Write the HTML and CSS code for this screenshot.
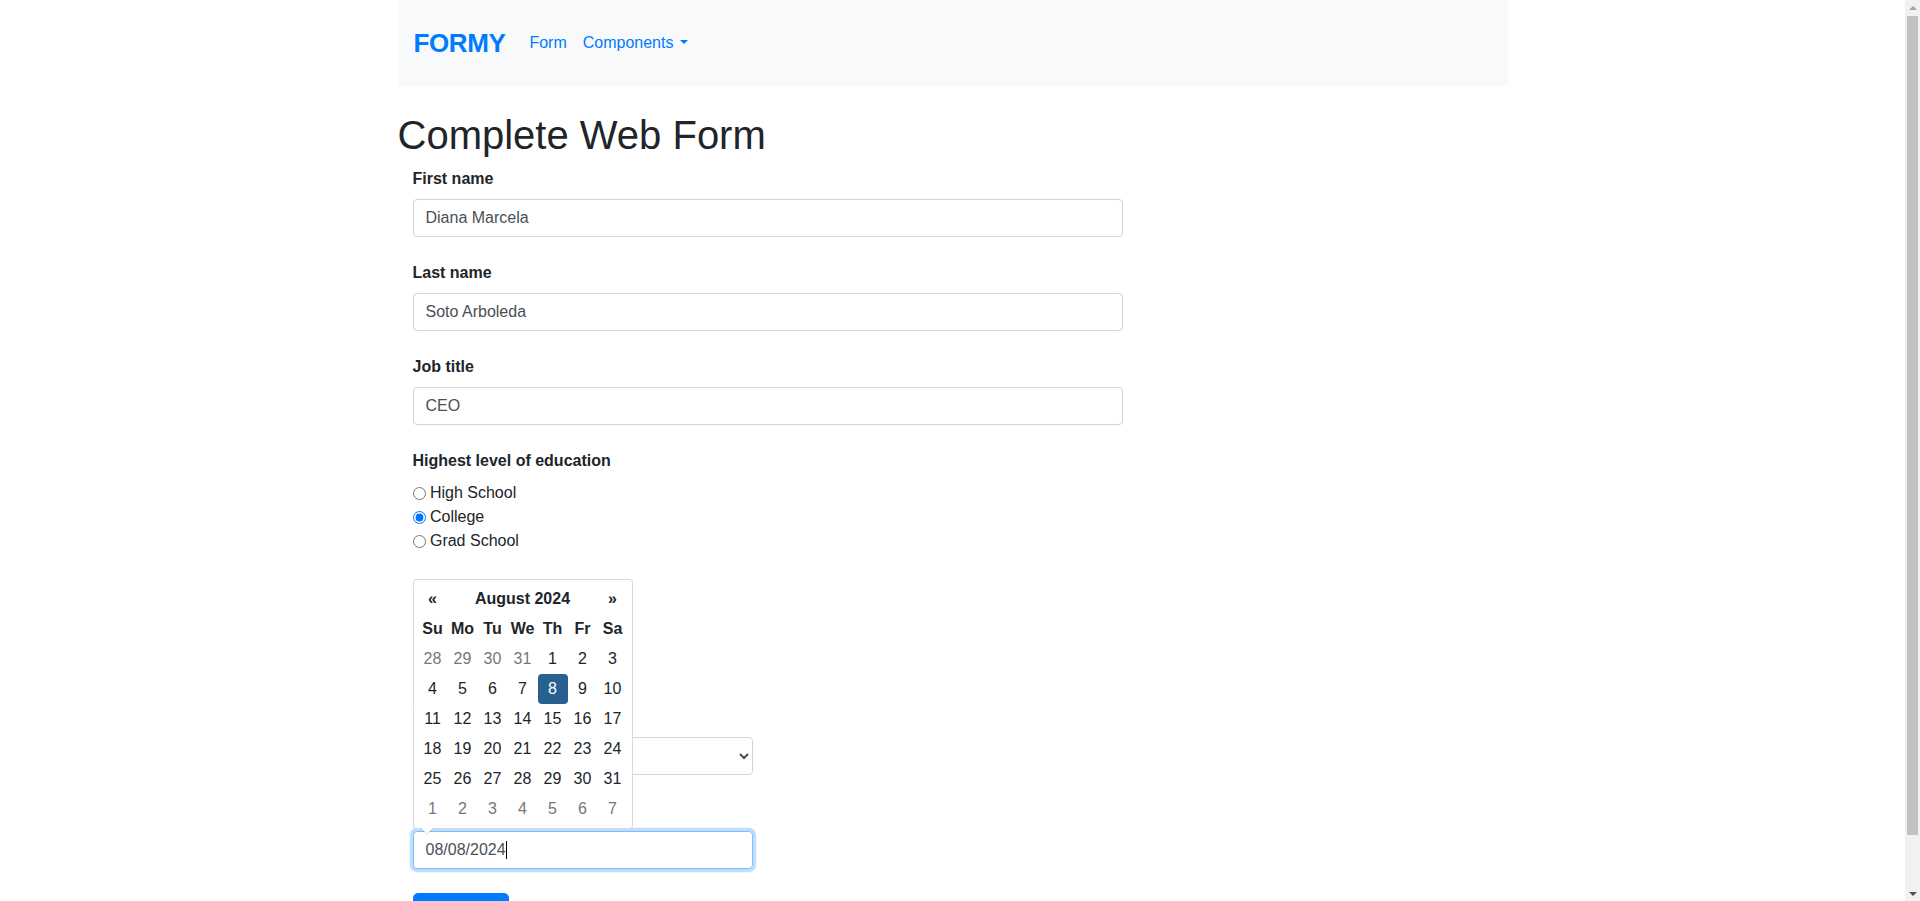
FILE: index.html
```html
<!DOCTYPE html>
<html lang="en">
<head>
<meta charset="utf-8">
<title>Formy</title>
<link rel="stylesheet" href="styles.css">
</head>
<body>
<div class="page">
<div class="container">
  <nav class="navbar">
    <a class="brand" href="#">FORMY</a>
    <ul class="nav">
      <li><a class="nav-link" href="#">Form</a></li>
      <li><a class="nav-link dropdown-toggle" href="#">Components</a></li>
    </ul>
  </nav>
  <h1 class="title">Complete Web Form</h1>
  <form class="form">
    <div class="group group-wide">
      <label class="label" for="first-name">First name</label>
      <input class="control" id="first-name" type="text" value="Diana Marcela">
    </div>
    <div class="group group-wide">
      <label class="label" for="last-name">Last name</label>
      <input class="control" id="last-name" type="text" value="Soto Arboleda">
    </div>
    <div class="group group-wide">
      <label class="label" for="job-title">Job title</label>
      <input class="control" id="job-title" type="text" value="CEO">
    </div>
    <div class="group">
      <div class="label">Highest level of education</div>
      <div class="choice"><input class="tick" type="radio" name="edu"> High School</div>
      <div class="choice"><input class="tick" type="radio" name="edu" checked> College</div>
      <div class="choice"><input class="tick" type="radio" name="edu"> Grad School</div>
    </div>
    <div class="group">
      <div class="label">Sex</div>
      <div class="choice"><input class="tick" type="checkbox"> Male</div>
      <div class="choice"><input class="tick" type="checkbox" checked> Female</div>
      <div class="choice"><input class="tick" type="checkbox"> Prefer not to say</div>
    </div>
    <div class="group group-narrow">
      <label class="label" for="years">Years of experience</label>
      <select class="control select" id="years">
        <option>Select an option</option>
        <option>0-1</option>
        <option>2-4</option>
        <option>5-9</option>
        <option>10+</option>
      </select>
    </div>
    <div class="group group-narrow">
      <div class="label">Date</div>
      <div class="date-wrap">
        <div class="control focused">08/08/2024<span class="caret"></span></div>
        <div class="datepicker">
          <table class="dp-table">
            <thead>
              <tr><th>«</th><th colspan="5">August 2024</th><th>»</th></tr>
              <tr><th>Su</th><th>Mo</th><th>Tu</th><th>We</th><th>Th</th><th>Fr</th><th>Sa</th></tr>
            </thead>
            <tbody>
              <tr><td class="muted">28</td><td class="muted">29</td><td class="muted">30</td><td class="muted">31</td><td>1</td><td>2</td><td>3</td></tr>
              <tr><td>4</td><td>5</td><td>6</td><td>7</td><td class="active">8</td><td>9</td><td>10</td></tr>
              <tr><td>11</td><td>12</td><td>13</td><td>14</td><td>15</td><td>16</td><td>17</td></tr>
              <tr><td>18</td><td>19</td><td>20</td><td>21</td><td>22</td><td>23</td><td>24</td></tr>
              <tr><td>25</td><td>26</td><td>27</td><td>28</td><td>29</td><td>30</td><td>31</td></tr>
              <tr><td class="muted">1</td><td class="muted">2</td><td class="muted">3</td><td class="muted">4</td><td class="muted">5</td><td class="muted">6</td><td class="muted">7</td></tr>
            </tbody>
          </table>
        </div>
      </div>
    </div>
    <div class="group group-last">
      <a class="btn" href="#">Submit</a>
    </div>
  </form>
</div>
</div>
<div class="scrollbar">
  <div class="sb-arrow sb-up"></div>
  <div class="sb-thumb"></div>
  <div class="sb-arrow sb-down"></div>
</div>
</body>
</html>
```

FILE: styles.css
```css
* { box-sizing: border-box; }

body {
  margin: 0;
  font-family: "Liberation Sans", Arial, sans-serif;
  font-size: 16px;
  line-height: 1.5;
  color: #212529;
  background: #fff;
}

.page {
  margin-right: 15px;
}

.container {
  width: 1140px;
  margin: 0 auto;
  padding: 0 15px;
}

.navbar {
  height: 86px;
  background: #f8f9fa;
  display: flex;
  align-items: center;
  padding: 0 16px;
}

.brand {
  font-size: 26px;
  font-weight: 700;
  line-height: 1.5;
  letter-spacing: -0.4px;
  color: #007bff;
  text-decoration: none;
  margin-right: 16px;
}

.nav {
  list-style: none;
  margin: 0;
  padding: 0;
  display: flex;
}

.nav-link {
  display: block;
  padding: 8px;
  color: #007bff;
  text-decoration: none;
}

.dropdown-toggle::after {
  content: "";
  display: inline-block;
  margin-left: 0.4em;
  vertical-align: 0.255em;
  border-top: 0.3em solid;
  border-right: 0.3em solid transparent;
  border-left: 0.3em solid transparent;
  border-bottom: 0;
}

.title {
  font-size: 40px;
  font-weight: 400;
  line-height: 1.2;
  margin: 25px 0 8px;
}

.form {
  padding: 0 15px;
}

.group {
  margin-bottom: 24px;
}

.group-last {
  margin-bottom: 16px;
}

.group-wide { max-width: 710px; }
.group-narrow { max-width: 340px; }

.label {
  display: block;
  font-weight: 700;
  margin-bottom: 8px;
}

.control {
  display: block;
  width: 100%;
  height: 38px;
  padding: 6px 12px;
  font-family: inherit;
  font-size: 16px;
  line-height: 1.5;
  color: #495057;
  background: #fff;
  border: 1px solid #ced4da;
  border-radius: 4px;
}

.select {
  padding: 6px 8px;
}

.focused {
  border-color: #80bdff;
  box-shadow: 0 0 0 3.2px rgba(0, 123, 255, 0.25);
}

.caret {
  display: inline-block;
  width: 1px;
  height: 18px;
  background: #000;
  vertical-align: -4px;
}

.choice {
  line-height: 24px;
}

.tick {
  margin: 0;
  width: 13px;
  height: 13px;
  vertical-align: -2px;
}

.date-wrap {
  position: relative;
}

.datepicker {
  position: absolute;
  left: 0;
  bottom: calc(100% + 2px);
  padding: 4px;
  background: #fff;
  border: 1px solid rgba(0, 0, 0, 0.15);
  border-radius: 4px;
  z-index: 10;
  color: #212529;
}

.datepicker::before {
  content: "";
  position: absolute;
  left: 6px;
  bottom: -7px;
  border-top: 7px solid rgba(0, 0, 0, 0.15);
  border-left: 7px solid transparent;
  border-right: 7px solid transparent;
}

.datepicker::after {
  content: "";
  position: absolute;
  left: 7px;
  bottom: -6px;
  border-top: 6px solid #fff;
  border-left: 6px solid transparent;
  border-right: 6px solid transparent;
}

.dp-table {
  border-collapse: collapse;
  margin: 0;
}

.dp-table th,
.dp-table td {
  width: 30px;
  height: 30px;
  padding: 0;
  text-align: center;
  border-radius: 4px;
}

.dp-table th {
  font-weight: 700;
}

.dp-table td.muted {
  color: #777;
}

.dp-table td.active {
  background: #286090;
  color: #fff;
}

.btn {
  display: inline-block;
  padding: 8px 16px;
  font-size: 20px;
  line-height: 1.5;
  color: #fff;
  background: #007bff;
  border: 1px solid #007bff;
  border-radius: 4.8px;
  text-decoration: none;
}

/* imitation of the browser's vertical scrollbar */
.scrollbar {
  position: fixed;
  top: 0;
  right: 0;
  width: 15px;
  height: 100vh;
  background: #f1f1f1;
  display: flex;
  flex-direction: column;
  align-items: center;
}

.sb-arrow {
  height: 15px;
  width: 15px;
  flex: none;
  display: flex;
  align-items: center;
  justify-content: center;
}

.sb-up::before {
  content: "";
  border-bottom: 4px solid #a3a3a3;
  border-left: 4px solid transparent;
  border-right: 4px solid transparent;
}

.sb-down::before {
  content: "";
  border-top: 4px solid #505050;
  border-left: 4px solid transparent;
  border-right: 4px solid transparent;
}

.sb-thumb {
  width: 11px;
  margin: 1px 0 0;
  height: 819px;
  background: #c1c1c1;
}

.sb-down {
  margin-top: auto;
}
```
